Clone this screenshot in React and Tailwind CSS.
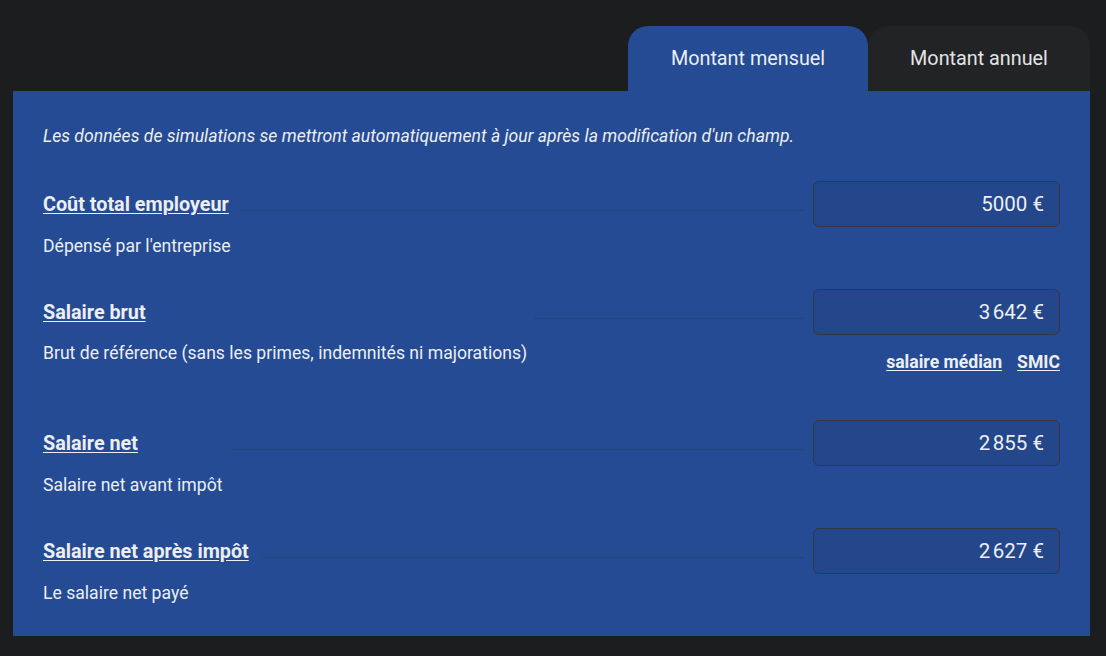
const rows = [
  {
    label: "Coût total employeur",
    desc: "Dépensé par l'entreprise",
    value: "5000\u00a0€",
    line: "w-[563px]",
  },
  {
    label: "Salaire brut",
    desc: "Brut de référence (sans les primes, indemnités ni majorations)",
    value: "3\u202f642\u00a0€",
    line: "w-[268px]",
    links: true,
  },
  {
    label: "Salaire net",
    desc: "Salaire net avant impôt",
    value: "2\u202f855\u00a0€",
    line: "w-[570px]",
  },
  {
    label: "Salaire net après impôt",
    desc: "Le salaire net payé",
    value: "2\u202f627\u00a0€",
    line: "w-[541px]",
  },
];

function Row({ row }) {
  return (
    <div>
      <div className="flex items-center h-[46px]">
        <a href="#" className="text-[19.8px] font-bold underline underline-offset-2 text-[#eceef2] whitespace-nowrap pt-[2px]">
          {row.label}
        </a>
        <div className="flex-1 flex justify-end self-stretch items-center pt-[12px]">
          <div className={`${row.line} border-b border-dotted border-[#2a3b5c]`} />
        </div>
        <div className="ml-[10px] w-[247px] h-[46px] rounded-md border border-[#34373d] bg-[#23478a] flex items-center justify-end pr-[15px] text-[20.5px] text-[#eceef2]">
          {row.value}
        </div>
      </div>
      {row.links ? (
        <div className="flex justify-between mt-[6px]">
          <p className="text-[17.6px] leading-6 text-[#eceef2]">{row.desc}</p>
          <div className="flex gap-[15px] mt-[9px] text-[17.6px] leading-6 font-bold text-[#eceef2]">
            <a href="#" className="underline underline-offset-2">salaire médian</a>
            <a href="#" className="underline underline-offset-2">SMIC</a>
          </div>
        </div>
      ) : (
        <p className="mt-[7px] text-[17.6px] leading-6 text-[#eceef2]">{row.desc}</p>
      )}
    </div>
  );
}

export default function App() {
  return (
    <div className="min-h-[656px] bg-[#1c1d1f] pt-[26px] px-[13px] pr-[16px] font-['Roboto',sans-serif]">
      <div className="flex justify-end">
        <button className="w-[240px] h-[65px] rounded-t-[20px] bg-[#244b93] text-[19.8px] text-[#eceef2]">
          Montant mensuel
        </button>
        <button className="w-[222px] h-[65px] rounded-t-[20px] bg-[#212325] text-[19.8px] text-[#e2e4e7]">
          Montant annuel
        </button>
      </div>
      <div className="bg-[#244b93] px-[30px] pt-[33px] pb-[31px]">
        <p className="italic text-[17.6px] leading-6 text-[#eceef2]">
          Les données de simulations se mettront automatiquement à jour après la modification d'un champ.
        </p>
        <div className="mt-[33px] flex flex-col">
          <Row row={rows[0]} />
          <div className="mt-[31px]"><Row row={rows[1]} /></div>
          <div className="mt-[46px]"><Row row={rows[2]} /></div>
          <div className="mt-[31px]"><Row row={rows[3]} /></div>
        </div>
      </div>
    </div>
  );
}
